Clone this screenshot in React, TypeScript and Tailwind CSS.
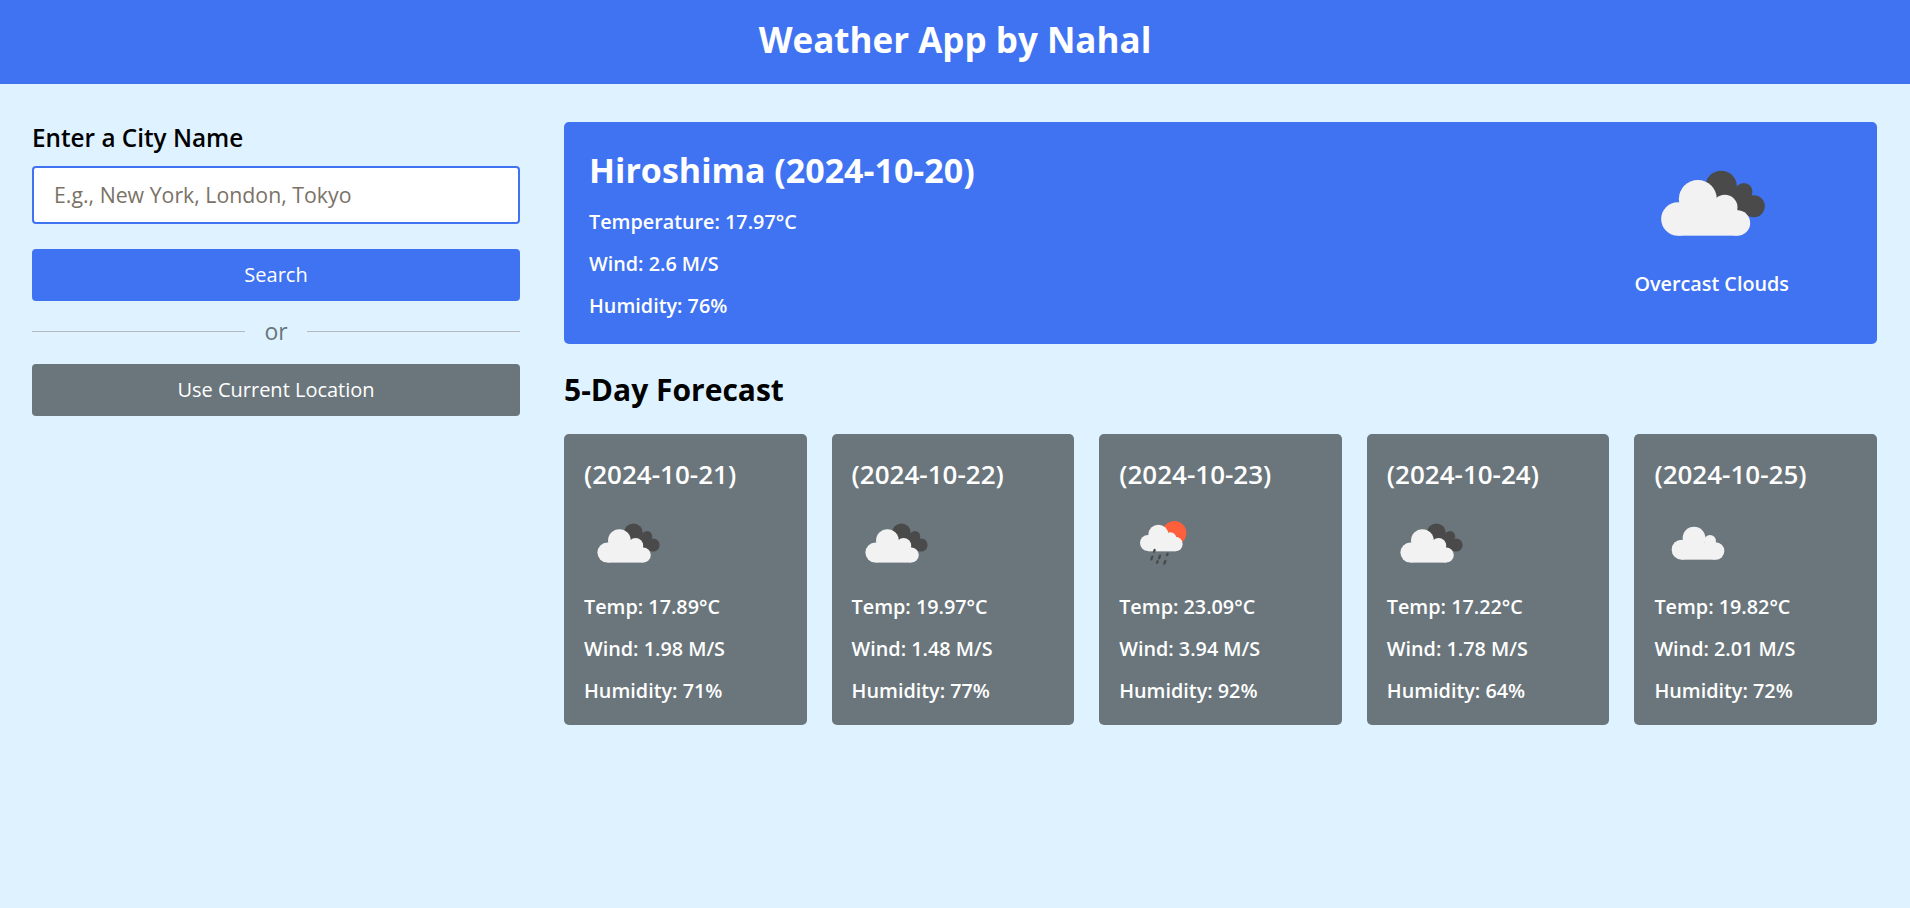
import React from 'react';

const sans = "font-['Open_Sans','Noto_Sans',sans-serif]";

// the icons are drawn in crop coordinates, so each viewBox maps to the same frame
const OvercastIcon = ({ className }: { className: string }) => (
    <svg viewBox="170 85 335 210" className={className}>
        <g fill="#4a4a4a">
            <circle cx="362" cy="140" r="47" />
            <circle cx="430" cy="156" r="26" />
            <circle cx="460" cy="200" r="33" />
            <rect x="350" y="150" width="100" height="70" />
        </g>
        <g fill="#f2f2f2">
            <circle cx="232" cy="238" r="50" />
            <circle cx="292" cy="178" r="57" />
            <circle cx="373" cy="203" r="38" />
            <circle cx="411" cy="250" r="38" />
            <rect x="232" y="210" width="179" height="78" />
        </g>
    </svg>
);

const ScatteredIcon = ({ className }: { className: string }) => (
    <svg viewBox="45 37 201 126" className={className}>
        <g fill="#f2f2f2">
            <circle cx="95" cy="120" r="30" />
            <circle cx="132" cy="85" r="34" />
            <circle cx="180" cy="94" r="18" />
            <circle cx="197" cy="124" r="26" />
            <rect x="95" y="100" width="102" height="50" />
        </g>
    </svg>
);

const RainIcon = ({ className }: { className: string }) => (
    <svg viewBox="30 37 201 126" className={className}>
        <circle cx="163" cy="70" r="36" fill="#ff5f3a" />
        <g fill="#f2f2f2">
            <circle cx="84" cy="100" r="24" />
            <circle cx="115" cy="75" r="30" />
            <circle cx="151" cy="86" r="18" />
            <circle cx="166" cy="103" r="22" />
            <rect x="84" y="90" width="82" height="35" />
        </g>
        <g stroke="#4a4a4a" strokeWidth="7" strokeLinecap="round">
            <line x1="104" y1="121" x2="102" y2="126" />
            <line x1="97" y1="141" x2="94" y2="149" />
            <line x1="120" y1="138" x2="117" y2="146" />
            <line x1="143" y1="132" x2="141" y2="136" />
            <line x1="113" y1="155" x2="111" y2="159" />
            <line x1="136" y1="154" x2="133" y2="162" />
        </g>
    </svg>
);

const days = [
    { date: '2024-10-21', temp: '17.89', wind: '1.98', humidity: '71', Icon: OvercastIcon },
    { date: '2024-10-22', temp: '19.97', wind: '1.48', humidity: '77', Icon: OvercastIcon },
    { date: '2024-10-23', temp: '23.09', wind: '3.94', humidity: '92', Icon: RainIcon },
    { date: '2024-10-24', temp: '17.22', wind: '1.78', humidity: '64', Icon: OvercastIcon },
    { date: '2024-10-25', temp: '19.82', wind: '2.01', humidity: '72', Icon: ScatteredIcon },
];

export default function App() {
    return (
        <div className={`${sans} min-h-[908px] bg-[#def3ff] text-black`}>
            <header className="h-[84px] bg-[#4073f1] flex items-center justify-center pb-[4px]">
                <h1 className="text-[35px] font-bold text-white">Weather App by Nahal</h1>
            </header>
            <main className="flex gap-[44px] pl-[32px] pr-[33px] pt-[38px]">
                <aside className="w-[488px] shrink-0">
                    <div className="text-[24.3px] font-semibold leading-[32px]">Enter a City Name</div>
                    <input
                        placeholder="E.g., New York, London, Tokyo"
                        className="mt-[12px] w-full h-[58px] px-[20px] pb-[2px] bg-white border-2 border-[#4073f1] rounded-[4px] text-[21.3px] outline-none placeholder:text-[#7a7267]"
                    />
                    <button className="mt-[25px] w-full h-[52px] bg-[#4073f1] rounded-[4px] text-white text-[20px] font-medium">Search</button>
                    <div className="flex items-center h-[63px] pb-[2px]">
                        <div className="flex-1 h-px bg-[#b5b9bc]" />
                        <span className="w-[62px] text-center text-[23px] leading-[28px] pb-[2px] text-[#6a767c]">or</span>
                        <div className="flex-1 h-px bg-[#b5b9bc]" />
                    </div>
                    <button className="w-full h-[52px] bg-[#6a767c] rounded-[4px] text-white text-[20px] font-medium">Use Current Location</button>
                </aside>
                <section className="flex-1 min-w-0">
                    <div className="h-[222px] bg-[#4073f1] rounded-[5px] flex justify-between text-white pl-[25px] pr-[88px]">
                        <div className="pt-[27px]">
                            <h2 className="text-[34px] font-bold leading-[42px]">Hiroshima (2024-10-20)</h2>
                            <p className="text-[19.8px] font-semibold leading-[28px] mt-[17px]">Temperature: 17.97°C</p>
                            <p className="text-[19.8px] font-semibold leading-[28px] mt-[14px]">Wind: 2.6 M/S</p>
                            <p className="text-[19.8px] font-semibold leading-[28px] mt-[14px]">Humidity: 76%</p>
                        </div>
                        <div className="flex flex-col items-center pt-[46px]">
                            <OvercastIcon className="w-[112px] h-[70px] ml-[2px]" />
                            <p className="text-[19.8px] font-semibold leading-[28px] mt-[32px]">Overcast Clouds</p>
                        </div>
                    </div>
                    <h3 className="text-[30px] font-bold leading-[38px] mt-[27px]">5-Day Forecast</h3>
                    <div className="grid grid-cols-5 gap-[25px] mt-[25px]">
                        {days.map((day) => (
                            <div key={day.date} className="h-[291px] bg-[#6a767c] rounded-[5px] text-white px-[20px] pt-[23px]">
                                <h4 className="text-[26px] font-semibold leading-[34px]">({day.date})</h4>
                                <day.Icon className="w-[67px] h-[42px] mt-[31px] ml-[11px] overflow-visible" />
                                <p className="text-[19.8px] font-semibold leading-[28px] mt-[29px]">Temp: {day.temp}°C</p>
                                <p className="text-[19.8px] font-semibold leading-[28px] mt-[14px]">Wind: {day.wind} M/S</p>
                                <p className="text-[19.8px] font-semibold leading-[28px] mt-[14px]">Humidity: {day.humidity}%</p>
                            </div>
                        ))}
                    </div>
                </section>
            </main>
        </div>
    );
}
